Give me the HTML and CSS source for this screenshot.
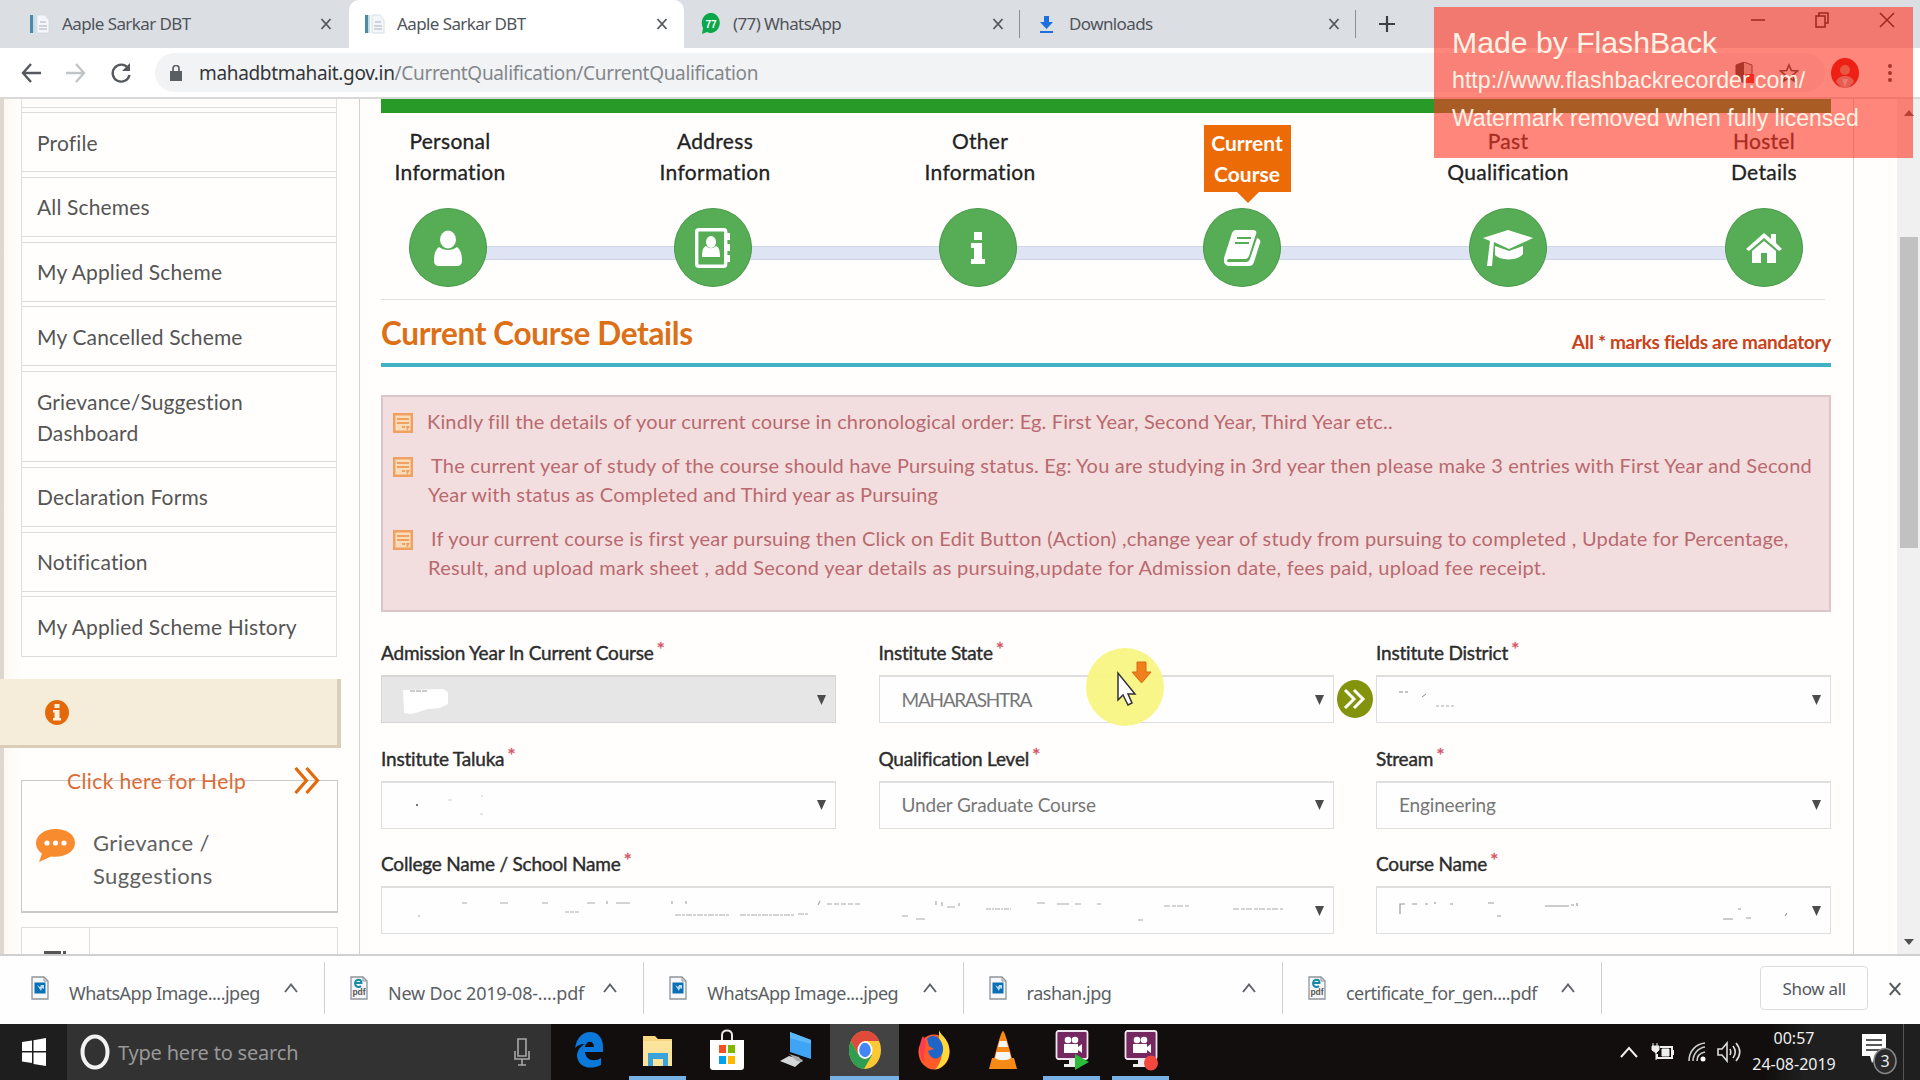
FILE: index.html
```html
<!DOCTYPE html>
<html lang="en">
<head>
<meta charset="utf-8">
<title>Aaple Sarkar DBT</title>
<link rel="stylesheet" href="styles.css">
</head>
<body>
<svg class="defs" width="0" height="0" aria-hidden="true">
  <symbol id="x" viewBox="0 0 12 12"><path d="M1.5 1 10.500 11M10.500 1 1.500 11" stroke="#54585c" stroke-width="1.800" fill="none"/></symbol>
  <symbol id="doc" viewBox="0 0 20 22"><path d="M0 2h3v18H0z" fill="#4d8aa8"/><path d="M3 2h2v18H3z" fill="#c4dbe8"/><path d="M7 2h8l4 5v13H7z" fill="#f4f7fa" stroke="#d0d8e0" stroke-width=".8"/><path d="M10 9h6M9 13h8M9 16h8" stroke="#c2c9d2" stroke-width="1.500"/></symbol>
  <symbol id="up" viewBox="0 0 14 10"><path d="M1 9 7 1.500 13 9" fill="none" stroke="#5f6368" stroke-width="1.900"/></symbol>
  <symbol id="img" viewBox="0 0 18 24"><path d="M1 1h12l4 4v18H1z" fill="#f6f7f8" stroke="#8f959b" stroke-width="1.300"/><path d="M13 1v4h4" fill="none" stroke="#8f959b"/><path d="M3.500 6.500h11v11h-11z" fill="#0b6fb8"/><path d="m6 9 3 2 1-2h3v4l-2-1-1 3z" fill="#b9dcf3"/></symbol>
  <symbol id="pdf" viewBox="0 0 18 24"><path d="M1 1h12l4 4v18H1z" fill="#f6f7f8" stroke="#8f959b" stroke-width="1.300"/><path d="M13 1v4h4" fill="none" stroke="#8f959b"/><path d="M5 7h6.500C11.500 3 6 2.500 5 7c0 4 4 5 6 3" fill="none" stroke="#1889a8" stroke-width="1.900"/></symbol>
  <symbol id="note" viewBox="0 0 20 20"><path d="M1.200 1.200h17.600v17.600H1.200z" fill="#fbdcb8" stroke="#f0a060" stroke-width="2.400"/><path d="M4 6h12M4 10h12M9 14h3" stroke="#f0a060" stroke-width="1.800"/><path d="m13 13h4l-3 5z" fill="#f0a060"/></symbol>
  <symbol id="dd" viewBox="0 0 9 10"><path d="M0 0h9L4.500 10z" fill="#4c4c4c"/></symbol>
  <symbol id="rec" viewBox="0 0 34 42"><path d="M9 35h16v3H9zM14 30h7v6h-7z" fill="#eee"/><rect x="1.500" y="2" width="31" height="28" rx="2" fill="#74285f" stroke="#efe6ee" stroke-width="1.800"/><circle cx="13" cy="11" r="3.300" fill="#fff"/><circle cx="20" cy="11" r="3.300" fill="#fff"/><path d="M9 15h14v3l4-3v9l-4-3v3H9z" fill="#fff"/></symbol>
</svg>

<header class="tabs">
  <div class="tab"><svg class="fav" width="20" height="22"><use href="#doc"/></svg><span class="ui tabt">Aaple Sarkar DBT</span><svg class="close" width="12" height="12"><use href="#x"/></svg></div>
  <div class="tab active"><svg class="fav" width="20" height="22"><use href="#doc"/></svg><span class="ui tabt">Aaple Sarkar DBT</span><svg class="close" width="12" height="12"><use href="#x"/></svg></div>
  <div class="tab third"><svg class="fav" width="20" height="22" viewBox="0 0 20 22"><path d="M1 21 2 15A9 10 0 1 1 6 19z" fill="#0aa84a"/><text x="10" y="15" text-anchor="middle" class="badge">77</text></svg><span class="ui tabt">(77) WhatsApp</span><svg class="close" width="12" height="12"><use href="#x"/></svg></div>
  <div class="tab fourth"><svg class="fav" width="20" height="22" viewBox="0 0 20 22"><path d="M7 3h5v6h4l-6.500 7L3 9h4zM3 18h13v2H3z" fill="#1d6fe0"/></svg><span class="ui tabt">Downloads</span><svg class="close" width="12" height="12"><use href="#x"/></svg></div>
  <svg class="plus" width="16" height="18" viewBox="0 0 16 18"><path d="M8 1v16M0 9h16" stroke="#3c4043" stroke-width="2.200"/></svg>
  <div class="winbtns">
    <svg width="14" height="16" viewBox="0 0 14 16"><path d="M0 8h14" stroke="#111" stroke-width="1.500"/></svg>
    <svg width="14" height="16" viewBox="0 0 14 16"><path d="M1 4h9v11H1zM4 4V1h9v10h-3" fill="none" stroke="#111" stroke-width="1.500"/></svg>
    <svg width="16" height="16" viewBox="0 0 16 16"><path d="m1 1 14 14M15 1 1 15" stroke="#111" stroke-width="1.500"/></svg>
  </div>
</header>

<div class="toolbar">
  <svg width="20" height="20" viewBox="0 0 20 20"><path d="M20 10H2M10 1 2 10l8 9" fill="none" stroke="#55595d" stroke-width="2.400"/></svg>
  <svg width="20" height="20" viewBox="0 0 20 20"><path d="M0 10h18M10 1l8 9-8 9" fill="none" stroke="#c2c5c8" stroke-width="2.400"/></svg>
  <svg width="20" height="20" viewBox="0 0 20 20"><path d="M17 5A8.500 8.500 0 1 0 18.500 12" fill="none" stroke="#55595d" stroke-width="2.400"/><path d="M19 0v8h-8z" fill="#55595d"/></svg>
  <div class="omni">
    <svg width="12" height="16" viewBox="0 0 12 16"><path d="M0 6h12v10H0z" fill="#5a5e62"/><path d="M3 6V3.500a3 3 0 0 1 6 0V6" fill="none" stroke="#5a5e62" stroke-width="1.700"/></svg>
    <span class="ui url"><b>mahadbtmahait.gov.in</b>/CurrentQualification/CurrentQualification</span>
  </div>
  <div class="extras">
    <svg width="20" height="22" viewBox="0 0 20 22"><path d="M9 0 17 3v8c0 5-5 8-8 10C6 19 1 16 1 11V3z" fill="#c9c9c9" stroke="#333"/><path d="M9 0v21C6 19 1 16 1 11V3z" fill="#333"/><path d="M10 12h9v9h-9z" fill="#e02020"/></svg>
    <svg width="20" height="20" viewBox="0 0 20 20"><path d="m10 2 2.400 5.500 6 .5-4.500 4 1.400 6L10 14.800 4.700 18l1.400-6L1.600 8l6-.5z" fill="none" stroke="#333" stroke-width="1.600"/></svg>
    <svg class="avatar" width="28" height="30" viewBox="0 0 28 30"><ellipse cx="14" cy="15" rx="14" ry="15" fill="#d40000"/><circle cx="14" cy="12" r="5" fill="#c98a70"/><path d="M5 24c2-8 16-8 18 0l-6 6h-6z" fill="#b99"/><path d="m11 21 3 8 3-8z" fill="#ddd"/></svg>
    <svg width="6" height="20" viewBox="0 0 6 20"><g fill="#333"><circle cx="3" cy="3" r="2"/><circle cx="3" cy="10" r="2"/><circle cx="3" cy="17" r="2"/></g></svg>
  </div>
</div>

<main class="page">
  <aside class="side">
    <ul class="menu">
      <li class="stub"></li>
      <li>Profile</li>
      <li>All Schemes</li>
      <li>My Applied Scheme</li>
      <li>My Cancelled Scheme</li>
      <li class="two">Grievance/Suggestion<br>Dashboard</li>
      <li>Declaration Forms</li>
      <li>Notification</li>
      <li>My Applied Scheme History</li>
    </ul>
    <div class="infobar"><svg width="24" height="25" viewBox="0 0 24 25"><ellipse cx="12" cy="12.500" rx="12" ry="12.500" fill="#e4690b"/><path d="M9.500 4h5v4h-5zM8 10h6.500v8H16v2.500H8V18h1.500v-5.500H8z" fill="#fdf3df"/></svg></div>
    <div class="help">
      <div class="helphead"><span>Click here for Help</span><svg width="27" height="27" viewBox="0 0 27 27"><path d="m1.500 1 11 12.500-11 12.500M12.500 1l11 12.500-11 12.500" fill="none" stroke="#e4690b" stroke-width="3.200"/></svg></div>
      <div class="griev"><svg width="39" height="33" viewBox="0 0 39 33"><path d="M19.500 0C9 0 0 6 0 14c0 5 3 8.500 6 10.500L3 33l12-5.500C28 29 39 23 39 14S30 0 19.500 0z" fill="#f98b2f"/><g fill="#fff"><circle cx="11" cy="14" r="2.600"/><circle cx="19.500" cy="14" r="2.600"/><circle cx="28" cy="14" r="2.600"/></g></svg><span>Grievance /<br>Suggestions</span></div>
    </div>
    <div class="nextbox"><div><svg width="24" height="5" viewBox="0 0 24 5"><path d="M0 2h17v3H0zM19 2h3v3h-3z" fill="#555"/></svg></div></div>
  </aside>

  <section class="panel">
    <div class="green"></div>
    <div class="steps">
      <div class="step"><p>Personal<br>Information</p><i><svg width="28" height="36" viewBox="0 0 28 36"><ellipse cx="14" cy="9.500" rx="8" ry="9" fill="#fff"/><path d="M5 17c5 4 13 4 18 0 4 3 5 8 5 14 0 3-2 5-5 5H5c-3 0-5-2-5-5 0-6 1-11 5-14z" fill="#fff"/></svg></i></div>
      <div class="step"><p>Address<br>Information</p><i><svg width="36" height="40" viewBox="0 0 36 40"><rect x="1.700" y="1.700" width="29" height="36.600" rx="2" fill="none" stroke="#fff" stroke-width="3.400"/><path d="M32 5h3v7h-3zM32 16h3v7h-3zM32 27h3v7h-3z" fill="#fff"/><ellipse cx="16" cy="14" rx="5" ry="6" fill="#fff"/><path d="M11 18c3 3 7 3 10 0 3 1 4 5 4 11H7c0-6 1-10 4-11z" fill="#fff"/></svg></i></div>
      <div class="step"><p>Other<br>Information</p><i><svg width="16" height="32" viewBox="0 0 16 32"><path d="M4 0h8v8H4zM1 11h11v16h3v5H1v-5h3V16H1z" fill="#fff"/></svg></i></div>
      <div class="step on"><p>Current<br>Course</p><i><svg width="37" height="36" viewBox="0 0 37 36"><path d="M12 0h17c3 0 4 2 3 4l-7 22c-1 2-2 3-4 3H5c-2 0-3 3 0 3h17c2 0 3-1 4-3l7-21c3 1 4 3 3 5l-6 19c-1 3-3 4-5 4H5c-4 0-6-4-5-8L8 3c1-2 2-3 4-3z" fill="#fff"/><path d="M13 8h14M11 13h14" stroke="#56ad56" stroke-width="2"/></svg></i></div>
      <div class="step"><p>Past<br>Qualification</p><i><svg class="cap" width="50" height="36" viewBox="0 0 50 36"><path d="M25 0 50 8 26 19 11 12 9 36H4l3-25-7-3z" fill="#fff"/><path d="m12 16 14 5 14-5v8c-5 7-22 7-28 1z" fill="#fff"/></svg></i></div>
      <div class="step"><p>Hostel<br>Details</p><i><svg width="36" height="30" viewBox="0 0 36 30"><path d="m18 0 7 6V1h5v9l6 6-3 2L18 5 3 18l-3-2z" fill="#fff"/><path d="m18 8 12 10v12h-9V20h-6v10H6V18z" fill="#fff"/></svg></i></div>
    </div>
    <div class="heading"><h1>Current Course Details</h1><span>All * marks fields are mandatory</span></div>
    <ul class="alert">
      <li><svg width="20" height="20"><use href="#note"/></svg><p class="first">Kindly fill the details of your current course in chronological order: Eg. First Year, Second Year, Third Year etc..</p></li>
      <li><svg width="20" height="20"><use href="#note"/></svg><p><span class="ind">The current year of study of the course should have Pursuing status. Eg: You are studying in 3rd year then please make 3 entries with First Year and Second</span><br>Year with status as Completed and Third year as Pursuing</p></li>
      <li><svg width="20" height="20"><use href="#note"/></svg><p class="last"><span class="ind">If your current course is first year pursuing then Click on Edit Button (Action) ,change year of study from pursuing to completed , Update for Percentage,</span><br>Result, and upload mark sheet , add Second year details as pursuing,update for Admission date, fees paid, upload fee receipt.</p></li>
    </ul>
    <form class="form">
      <div class="field"><label>Admission Year In Current Course<sup>*</sup></label><div class="sel off"><svg class="marks" width="60" height="34" viewBox="0 0 60 34"><path d="M3 7l40-1 5 3v12l-8 4-12 1-16 5-8-1z" fill="#fff"/><path d="M10 8h18" stroke="#999" stroke-dasharray="5 1"/></svg><svg class="dd" width="9" height="10"><use href="#dd"/></svg></div></div>
      <div class="field"><label>Institute State<sup>*</sup></label><div class="sel"><span class="caps">MAHARASHTRA</span><svg class="dd" width="9" height="10"><use href="#dd"/></svg></div></div>
      <div class="field"><label>Institute District<sup>*</sup></label><div class="sel"><svg class="marks" width="60" height="34" viewBox="0 0 60 34"><path d="M4 9h4M10 9h3M27 14l4-3" stroke="#888"/><path d="M41 23h18" stroke="#aaa" stroke-dasharray="3 2"/></svg><svg class="dd" width="9" height="10"><use href="#dd"/></svg></div></div>
      <div class="field"><label>Institute Taluka<sup>*</sup></label><div class="sel"><svg class="marks" width="100" height="34" viewBox="0 0 100 34"><path d="M16 16h2v2h-2z" fill="#777"/><path d="M48 12h4M81 8h2M80 26h3" stroke="#ccc"/></svg><svg class="dd" width="9" height="10"><use href="#dd"/></svg></div></div>
      <div class="field"><label>Qualification Level<sup>*</sup></label><div class="sel"><span>Under Graduate Course</span><svg class="dd" width="9" height="10"><use href="#dd"/></svg></div></div>
      <div class="field"><label>Stream<sup>*</sup></label><div class="sel"><span>Engineering</span><svg class="dd" width="9" height="10"><use href="#dd"/></svg></div></div>
      <div class="field wide"><label>College Name / School Name<sup>*</sup></label><div class="sel"><svg class="marks" width="890" height="34" viewBox="0 0 890 34"><g fill="none" stroke="#aaa" stroke-width="1.200"><path d="M62 9h5M100 9h8M142 9h6M187 9h8M207 10v-3M216 9h14M272 10v-3M286 10v-3"/><path d="M165 18h14" stroke-dasharray="4 1"/><path d="M275 21h55M340 21h55M398 20h10" stroke-dasharray="6 1 3 1"/><path d="M418 11l2-4M427 10h34" stroke-dasharray="5 2"/><path d="M536 11v-4M542 12v-4M547 13h8M559 12v-3"/><path d="M586 15h25" stroke-dasharray="5 1 2 1"/><path d="M516 25h9M738 26h5M502 22h6"/><path d="M637 9h8M657 10h12M675 10h6M697 10h4"/><path d="M764 12h25M833 15h50" stroke-dasharray="6 2 4 1"/><path d="M18 22h2"/></g></svg><svg class="dd" width="9" height="10"><use href="#dd"/></svg></div></div>
      <div class="field"><label>Course Name<sup>*</sup></label><div class="sel"><svg class="marks" width="400" height="34" viewBox="0 0 400 34"><g fill="none" stroke="#999" stroke-width="1.200"><path d="M5 20V10h5M17 10h5M30 10h3M40 10v-2M55 10h3M93 9h6M150 12h24M182 12v-3M176 11h3"/><path d="M102 22h4M343 15h3M328 25h10M351 24h5M390 22l2-3"/></g></svg><svg class="dd" width="9" height="10"><use href="#dd"/></svg></div></div>
    </form>
  </section>
  <div class="scroll"><svg width="10" height="6" viewBox="0 0 10 6"><path d="M0 6h10L5 0z" fill="#505050"/></svg><div class="thumb"></div><svg width="10" height="6" viewBox="0 0 10 6"><path d="M0 0h10L5 6z" fill="#505050"/></svg></div>
</main>

<footer class="shelf">
  <div class="dl"><svg width="18" height="24"><use href="#img"/></svg><span class="ui">WhatsApp Image....jpeg</span><svg class="chev" width="14" height="10"><use href="#up"/></svg></div>
  <div class="dl"><svg width="18" height="24"><use href="#pdf"/><text x="9" y="19" text-anchor="middle" class="pdft">pdf</text></svg><span class="ui loose">New Doc 2019-08-....pdf</span><svg class="chev" width="14" height="10"><use href="#up"/></svg></div>
  <div class="dl"><svg width="18" height="24"><use href="#img"/></svg><span class="ui">WhatsApp Image....jpeg</span><svg class="chev" width="14" height="10"><use href="#up"/></svg></div>
  <div class="dl"><svg width="18" height="24"><use href="#img"/></svg><span class="ui">rashan.jpg</span><svg class="chev" width="14" height="10"><use href="#up"/></svg></div>
  <div class="dl"><svg width="18" height="24"><use href="#pdf"/><text x="9" y="19" text-anchor="middle" class="pdft">pdf</text></svg><span class="ui">certificate_for_gen....pdf</span><svg class="chev" width="14" height="10"><use href="#up"/></svg></div>
  <div class="showall ui">Show all</div>
  <svg width="14" height="14"><use href="#x"/></svg>
</footer>

<nav class="taskbar">
  <div class="start"><svg width="24" height="28" viewBox="0 0 24 28"><path d="m0 4 10-1.500V13H0zM11.500 2.200 24 0v13H11.500zM0 14.500h10V25L0 23.500zM11.500 14.500H24V28l-12.500-2z" fill="#fff"/></svg></div>
  <div class="search"><svg width="30" height="36" viewBox="0 0 30 36"><ellipse cx="15" cy="18" rx="12.500" ry="15.500" fill="none" stroke="#f2f2f2" stroke-width="4"/></svg><span class="ui">Type here to search</span><svg class="mic" width="16" height="28" viewBox="0 0 16 28"><path d="M4 1h8v17H4zM1 13v8h14v-8M8 21v6M4 27h8" fill="none" stroke="#a8a8a8" stroke-width="1.600"/></svg></div>
  <div class="apps">
    <div><svg width="30" height="38" viewBox="0 0 30 38"><path d="M1 17C3 6 9 1 16 1c8 0 13 6 13 15v5H11c1 9 10 10 16 6v7C14 40 4 35 3 25c0-6 4-10 8-12-5 0-8 2-10 4zm10-1h9c0-7-8-7-9 0z" fill="#0b78dc"/></svg></div>
    <div class="run"><svg width="32" height="34" viewBox="0 0 32 34"><path d="M1 3h12l3 3h14v27H1z" fill="#f7d780"/><path d="M1 8h29v25H1z" fill="#fce39c"/><path d="M6 20h20v13h-5v-7H11v7H6z" fill="#3ba3dc"/></svg></div>
    <div><svg width="34" height="42" viewBox="0 0 34 42"><path d="M12 13V6c0-6 10-6 10 0v7" fill="none" stroke="#e8e8e8" stroke-width="2"/><path d="M0 11h34v27c0 2-1 3-3 3H3c-2 0-3-1-3-3z" fill="#fff"/><path d="M9 16h7v8H9z" fill="#f05022"/><path d="M18 16h7v8h-7z" fill="#7eb900"/><path d="M9 27h7v8H9z" fill="#00a2ed"/><path d="M18 27h7v8h-7z" fill="#fdb900"/></svg></div>
    <div><svg width="32" height="36" viewBox="0 0 32 36"><path d="m10 0 21 8v19L10 20z" fill="#3fa4f4"/><path d="m10 0 21 8v4L10 6z" fill="#5cb8fb"/><path d="m0 29 9-5 14 4-8 7z" fill="#d4d6d8"/><path d="m9 22 10 3 4 5-6-1z" fill="#aaa"/></svg></div>
    <div class="run chrome"><svg width="32" height="40" viewBox="0 0 32 40"><ellipse cx="16" cy="20" rx="16" ry="19" fill="#fcc934"/><path d="M1.800 11A16 19 0 0 1 30.200 11H16L9 24z" fill="#e04a3a"/><path d="M1.800 11A16 19 0 0 0 15 39l8-14-14-1z" fill="#2f9e50"/><ellipse cx="16" cy="20" rx="7.500" ry="9" fill="#fff"/><ellipse cx="16" cy="20" rx="5.800" ry="7.200" fill="#4285f4"/></svg></div>
    <div><svg width="32" height="40" viewBox="0 0 32 40"><ellipse cx="16" cy="22" rx="15.500" ry="17.500" fill="#ff5a2a"/><path d="M21 0c1 5 11 9 10.500 22C31 34 22 39 17 39.500 27 30 24 14 21 10z" fill="#ffd83a"/><path d="M5 32C1 24 1 12 5 6l3 5z" fill="#ff3b4f"/><path d="M9 9C14 3 23 6 25 17c1 9-5 13-10 11-2-1-4-3-5-7l6-2-5-3z" fill="#1f65c8"/></svg></div>
    <div><svg width="28" height="40" viewBox="0 0 28 40"><path d="M3 28h22l3 11H0z" fill="#f78a16"/><path d="M14 1c2 0 7 20 9 28-4 4-14 4-18 0C7 21 12 1 14 1z" fill="#f78a16"/><path d="M10.500 11h7l1.500 6H9zM7.500 22h13l1.500 6c-3 3-13 3-16 0z" fill="#f5f5f5"/></svg></div>
    <div class="run"><svg width="34" height="42"><use href="#rec"/><path d="m20 25 14 8-14 8z" fill="#2dbb3c"/></svg></div>
    <div class="run"><svg width="34" height="42"><use href="#rec"/><ellipse cx="27" cy="34" rx="7" ry="7.500" fill="#f4473f"/></svg></div>
  </div>
  <div class="tray">
    <svg width="18" height="12" viewBox="0 0 18 12"><path d="m1 11 8-9 8 9" fill="none" stroke="#eee" stroke-width="2"/></svg>
    <svg width="24" height="20" viewBox="0 0 24 20"><path d="M9 5h12v11H6v-4M22 8v5" fill="none" stroke="#eee" stroke-width="2"/><path d="M11 7h7v7h-7zM1 4h7v4L5 11 1 8zM2 1v3M6 1v3M5 10v8" fill="#eee" stroke="#eee"/></svg>
    <svg width="18" height="20" viewBox="0 0 18 20"><path d="M1 19C1 9 8 2 17 1M5 19C5 12 10 6 17 5M9 19c0-5 3-8 8-9" fill="none" stroke="#ccc" stroke-width="1.600"/><circle cx="15" cy="17" r="2.500" fill="#fff"/></svg>
    <svg width="24" height="22" viewBox="0 0 24 22"><path d="M1 8h4l5-6v18l-5-6H1zM13 8c1 2 1 4 0 6M16 5c3 4 3 8 0 12M19 2c5 6 5 12 0 18" fill="none" stroke="#ddd" stroke-width="1.600"/></svg>
    <p class="clock ui"><span>00:57</span><span>24-08-2019</span></p>
    <svg class="notif" width="36" height="42" viewBox="0 0 36 42"><path d="M1 1h24v22h-9l-5 7-2-7H1z" fill="#fff"/><path d="M5 7h16M5 12h16M5 17h16" stroke="#222" stroke-width="1.600"/><ellipse cx="24" cy="28" rx="11" ry="12.500" fill="#2a2a2a" stroke="#888" stroke-width="1.600"/><text x="24" y="34" text-anchor="middle" class="ncount">3</text></svg>
    <div class="peek"></div>
  </div>
</nav>

<svg class="go" width="38" height="40" viewBox="0 0 38 40"><ellipse cx="19" cy="20" rx="18" ry="19" fill="#84930c"/><path d="m9 11 9 9-9 9M18 11l9 9-9 9" fill="none" stroke="#fff" stroke-width="3"/></svg>
<svg class="pointer" width="80" height="82" viewBox="0 0 80 82"><ellipse cx="40" cy="41" rx="39" ry="39" fill="#f8f683" fill-opacity=".96"/><path d="M52 16h9v10h5l-9.500 11L47 26h5z" fill="#f0801e" stroke="#d96a10"/><path d="M33 27v27l5-5 5 10 4-2-4-9h7z" fill="#fff" stroke="#333" stroke-width="1.500"/></svg>
<div class="watermark"><p>Made by FlashBack</p><p>http://www.flashbackrecorder.com/</p><p>Watermark removed when fully licensed</p></div>
</body>
</html>
```
FILE: styles.css
```css
* { box-sizing: border-box; margin: 0; padding: 0; }
body { width: 1920px; height: 1080px; overflow: hidden; position: relative; display: flex; flex-direction: column; background: #fff; font-family: Lato, "Open Sans", sans-serif; color: #4d4d4d; white-space: nowrap; }
svg { display: block; flex: none; }
.defs { position: absolute; }
ul { list-style: none; }
.ui { font-family: "Noto Sans", "Open Sans", sans-serif; }

.tabs { flex: none; height: 48px; background: #dbdee3; display: flex; align-items: stretch; }
.tab { display: flex; align-items: center; width: 349px; padding: 0 17px 0 30px; }
.tab.active { width: 335px; padding: 0 16px; background: #fff; border-radius: 10px 10px 0 0; }
.tab.third { width: 336px; padding: 0 16px 0 17px; position: relative; }
.tab.fourth { width: 336px; padding: 0 16px 0 17px; position: relative; }
.third::after, .fourth::after { content: ""; position: absolute; right: 0; top: 10px; width: 1px; height: 28px; background: #8d9196; }
.tabt { font-size: 17px; color: #50545a; margin: -2px 0 0 12px; letter-spacing: -.6px; }
.close { margin-left: auto; }
.badge { font: bold 10px "Liberation Sans", sans-serif; fill: #fff; }
.plus { margin: 15px 0 0 23px; }
.winbtns { margin-left: auto; display: flex; gap: 50px; padding: 12px 25px 0 0; }

.toolbar { flex: none; height: 51px; background: #fff; border-bottom: 2px solid #d9d9d9; display: flex; align-items: center; padding-left: 21px; gap: 25px; }
.omni { width: 1670px; height: 39px; border-radius: 20px; background: #f1f3f4; display: flex; align-items: center; padding-left: 15px; gap: 17px; margin-left: -1px; }
.url { font-size: 19px; color: #83878c; letter-spacing: -.33px; }
.url b { font-weight: 400; color: #33363a; }
.extras { position: absolute; left: 1735px; top: 58px; display: flex; align-items: center; gap: 24px; }
.avatar { margin: 0 4px 0 8px; }

.page { flex: none; height: 855px; display: flex; overflow: hidden; background: #fffefd; }
.side { width: 359px; padding-left: 21px; background: linear-gradient(90deg, #ded6d0 4px, #fdf8f0 4px, #fffefd 21px); }
.menu { width: 316px; border-left: 1px solid #e0e0e0; border-right: 1px solid #e0e0e0; }
.menu li { height: 60px; margin-bottom: 4.750px; border: solid #dcdcdc; border-width: 1px 0; display: flex; align-items: center; padding-left: 15px; font-size: 21px; line-height: 31px; color: #555; letter-spacing: .15px; }
.menu li.stub { height: 9px; border-top: 0; margin-bottom: 4px; }
.menu li.two { height: 91px; }
.menu li:last-child { margin-bottom: 0; height: 61px; }
.infobar { margin: 22px 0 0 -21px; width: 341px; height: 69px; background: #f5ecda; border: solid #dccdb8; border-width: 0 4px 3px 0; display: flex; align-items: center; padding-left: 45px; position: relative; }
.help { margin-top: 32px; width: 317px; height: 133px; border: 1px solid #c9c9c9; border-bottom-width: 2px; }
.helphead { display: flex; align-items: center; justify-content: space-between; height: 30px; margin-top: -16px; padding: 0 16px 0 45px; font-size: 21px; letter-spacing: .4px; color: #dc6b35; }
.griev { display: flex; align-items: flex-start; padding: 34px 0 0 14px; gap: 18px; font-size: 22px; letter-spacing: .4px; line-height: 33px; color: #606060; }
.griev span { margin-top: -3px; }
.nextbox { margin-top: 14px; width: 317px; height: 40px; border: 1px solid #ddd; border-bottom: 0; }
.nextbox div { width: 68px; height: 40px; border-right: 1px solid #ddd; padding: 21px 0 0 22px; }

.panel { width: 1495px; border: solid #d5d2cb; border-width: 0 1px; padding: 0 22px 0 21px; }
.green { height: 14px; background: #289a28; }
.steps { display: grid; grid-template-columns: 265px 265px 264px 266px 256px 134px; height: 187px; width: 1450px; padding-top: 12px; position: relative; }
.steps::before { content: ""; position: absolute; left: 67px; width: 1316px; top: 133px; height: 12px; background: #dfe4f4; border: solid #cfd6e8; border-width: 1px 0; }
.steps::after { content: ""; position: absolute; left: 0; right: 6px; bottom: 0; height: 1px; background: #e2e2e2; }
.step { width: 134px; display: flex; flex-direction: column; align-items: center; position: relative; }
.step p { height: 67px; padding: 0; margin-bottom: 16px; text-align: center; font-size: 21px; letter-spacing: .3px; line-height: 31px; color: #222; -webkit-text-stroke: .3px #222; }
.step:nth-child(-n+3) p { position: relative; left: 2px; }
.step i { width: 78px; height: 79px; border-radius: 50%; background: #56ad56; border: 1px solid #4a9a4a; display: flex; align-items: center; justify-content: center; }
.step.on p { width: 87px; padding: 2px 0; background: #ec6b06; color: #fff; font-weight: 700; letter-spacing: 0; -webkit-text-stroke: 0; position: relative; left: 5px; }
.step.on p::after { content: ""; position: absolute; left: 33px; top: 67px; border: 11px solid transparent; border-top-color: #ec6b06; border-bottom: 0; }
.heading { height: 67px; border-bottom: 4px solid #41b2c5; display: flex; justify-content: space-between; align-items: flex-start; margin-bottom: 28px; }
.heading h1 { font-size: 31.500px; letter-spacing: -.35px; line-height: 40px; margin-top: 13px; color: #dd6f16; }
.heading span { font-size: 19px; letter-spacing: -.3px; line-height: 24px; margin-top: 30px; font-weight: 700; color: #c8421a; }
.alert { height: 217px; width: 1450px; background: #f2dede; border: 2px solid #dac6c9; padding: 10px 0 0 10px; color: #b9696f; font-size: 20px; letter-spacing: .2px; }
.alert li { display: flex; gap: 15px; line-height: 29.700px; }
.alert li + li { margin-top: 13.800px; }
.alert svg { margin-top: 6px; }
.alert p.first { margin-left: -1px; letter-spacing: .15px; }
.alert p.last { letter-spacing: .28px; }
.ind { margin-left: 3px; }
.last .ind { letter-spacing: .22px; }
.form { display: grid; grid-template-columns: 455px 455px 455px; column-gap: 42.500px; row-gap: 0; margin-top: 25px; width: 1450px; }
.field { height: 105.500px; }
.wide { grid-column: span 2; }
.field label { display: block; height: 38px; line-height: 31px; font-size: 19px; letter-spacing: -.2px; color: #2c2c2c; -webkit-text-stroke: .4px #2c2c2c; }
.field sup { color: #d4505f; font-size: 20px; line-height: 0; vertical-align: 4px; margin-left: 3px; -webkit-text-stroke: .3px #d4505f; }
.sel { height: 48px; border: solid #dedede; border-width: 2px 1px 1px; background: #fefefe; display: flex; align-items: center; padding: 0 9px 0 22px; font-size: 19px; letter-spacing: -.15px; color: #777; }
.sel span { margin-top: -1px; }
.sel.off { background: #e6e6e6; border-color: #d6d6d6; }
.sel .caps { letter-spacing: -1.250px; }
.sel .marks { margin-left: -4px; }
.sel .dd { margin-left: auto; }
.scroll { width: 23px; margin-left: 43px; background: #f0f0f0; display: flex; flex-direction: column; align-items: center; padding: 11px 0 9px; }
.scroll .thumb { width: 18px; height: 311px; margin: 121px 0 auto; background: #c1c1c1; }

.shelf { flex: none; height: 70px; border-top: 2px solid #cfcfcf; background: #fefefe; display: flex; align-items: flex-start; }
.dl { width: 319.300px; height: 52px; margin-top: 6px; border-right: 1px solid #cfcfcf; display: flex; align-items: center; padding: 0 26px 0 25px; font-size: 18px; letter-spacing: -.5px; color: #5b5f64; }
.dl:first-child { width: 325px; padding-left: 31px; }
.dl span { margin: 9px 0 0 20px; }
.dl .loose { letter-spacing: -.2px; }
.dl .chev { margin-left: auto; }
.pdft { font: bold 8.500px "Liberation Sans", sans-serif; letter-spacing: 0; fill: #555; }
.showall { width: 108px; height: 44px; margin: 10px 20px 0 158px; border: 1px solid #dadce0; border-radius: 4px; display: flex; align-items: center; justify-content: center; font-size: 17px; letter-spacing: -.3px; color: #54585d; }
.shelf > svg { margin-top: 26px; }

.taskbar { flex: none; height: 56px; background: #110e0d; display: flex; }
.start { width: 67px; background: #1e1e1e; display: flex; align-items: center; padding-left: 22px; }
.search { width: 484px; background: #323232; display: flex; align-items: center; padding: 0 21px 0 13px; font-size: 20px; letter-spacing: -.2px; color: #989898; }
.search span { margin-left: 8px; }
.mic { margin-left: auto; }
.apps { display: flex; margin-left: 3px; }
.apps div { width: 69px; display: flex; align-items: center; justify-content: center; padding-bottom: 4px; position: relative; }
.apps .run::after { content: ""; position: absolute; left: 6px; right: 6px; bottom: 0; height: 4px; background: #76b0e4; }
.apps .chrome { background: #434343; }
.apps .chrome::after { left: 0; right: 0; }
.tray { margin-left: auto; width: 300px; display: flex; align-items: center; background: linear-gradient(100deg, #110e0d 150px, #1f1f1f 190px); }
.tray svg { margin-right: 11px; }
.tray svg:nth-child(1) { margin-right: 13px; }
.tray svg:nth-child(2) { margin-right: 13px; }
.tray svg:nth-child(4) { margin-right: 8px; }
.clock { width: 90px; display: flex; flex-direction: column; align-items: center; font-size: 16px; line-height: 26px; color: #eee; margin: -2px 22px 0 0; }
.tray .notif { margin: 4px 0 0; }
.peek { width: 1px; height: 56px; background: #555; margin-left: 6px; }
.ncount { font: 16px "Noto Sans", sans-serif; fill: #eee; }

.go { position: absolute; left: 1336px; top: 679px; }
.pointer { position: absolute; left: 1085px; top: 646px; }
.watermark { position: absolute; left: 1434px; top: 7px; width: 479px; height: 151px; background: rgba(255, 53, 35, .6); color: #fff3e6; font-family: "Liberation Sans", Arial, sans-serif; padding: 16px 0 0 18px; }
.watermark p { width: max-content; font-size: 23.200px; line-height: 38px; }
.watermark p:first-child { font-size: 30.200px; padding-top: 1px; line-height: 37px; }
.watermark p:last-child { font-size: 23px; }
```
